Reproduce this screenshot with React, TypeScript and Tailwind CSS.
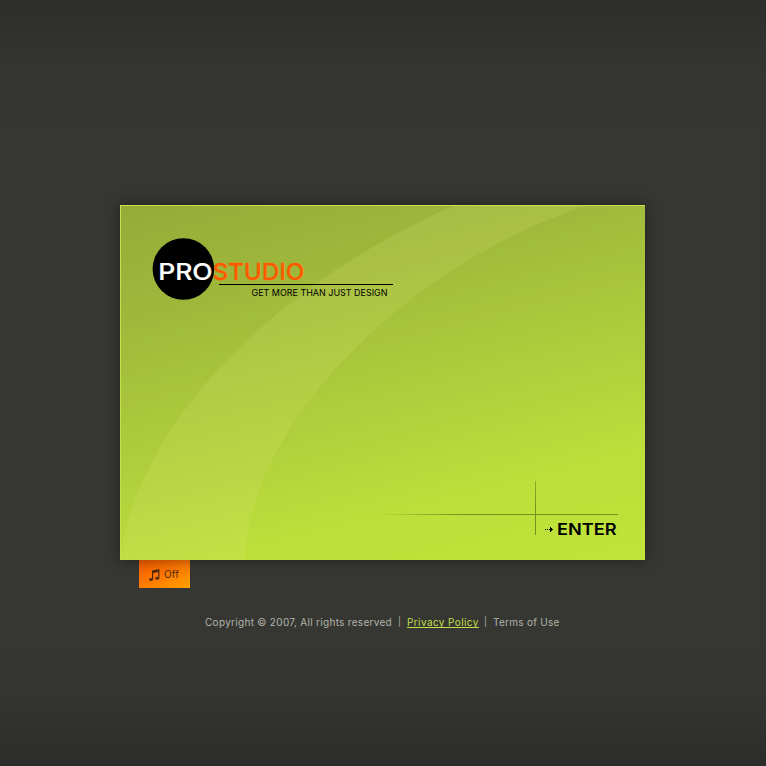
function Logo() {
  return (
    <svg className="block h-[70px] w-[242px] overflow-visible" viewBox="0 0 242 70" role="img" aria-label="Prostudio">
      <circle cx="31.4" cy="32" r="30.8" fill="#000" />
      <g fontFamily='"Inter", "Liberation Sans", sans-serif' fontSize="23.4" fontWeight="500">
        <text x="6.2" y="43" fill="#fff" stroke="#fff" strokeWidth=".2" textLength="54.5" lengthAdjust="spacingAndGlyphs">PRO</text>
        <text x="60.4" y="43" fill="#ff5a00" stroke="#ff5a00" strokeWidth=".3" textLength="92" lengthAdjust="spacingAndGlyphs">STUDIO</text>
      </g>
      <rect x="67" y="47" width="174" height="1" fill="#000" />
      <text x="99.5" y="59" fontFamily='"Inter", "Liberation Sans", sans-serif' fontSize="9.6" fill="#000" textLength="136" lengthAdjust="spacingAndGlyphs">GET MORE THAN JUST DESIGN</text>
    </svg>
  );
}

function Swoosh() {
  return (
    <svg className="pointer-events-none absolute inset-0 h-full w-full" viewBox="0 0 525 355" aria-hidden="true">
      <path d="M335 0C158 78 18 215 0 355H125C130 210 300 53 469 0Z" fill="#e0ea78" fillOpacity=".17" />
      <path d="M0 .5H525M.5 0V355" stroke="#c4e04a" fill="none" />
    </svg>
  );
}

function EnterLink() {
  return (
    <a href="#enter" className="block" aria-label="Enter">
      <svg className="block h-[60px] w-[241px]" viewBox="0 0 241 60">
        <defs>
          <linearGradient id="rule" x1="0" x2="1" y1="0" y2="0">
            <stop offset="0" stopColor="#799020" stopOpacity="0" />
            <stop offset=".35" stopColor="#799020" />
          </linearGradient>
          <linearGradient id="post" x1="0" x2="0" y1="0" y2="1">
            <stop offset="0" stopColor="#799020" stopOpacity=".65" />
            <stop offset=".5" stopColor="#799020" />
          </linearGradient>
        </defs>
        <rect x="0" y="33" width="241" height="1" fill="url(#rule)" />
        <rect x="158" y="0" width="1" height="54" fill="url(#post)" />
        <g fill="#000" shapeRendering="crispEdges">
          <rect x="168" y="48" width="1" height="1" />
          <rect x="170" y="48" width="1" height="1" />
          <rect x="172" y="48" width="4" height="1" />
          <rect x="173" y="46" width="1" height="5" />
          <rect x="174" y="47" width="1" height="3" />
        </g>
        <text x="180" y="54" fontFamily='"Inter", "Liberation Sans", sans-serif' fontSize="16.5" fontWeight="600" textLength="59.7" lengthAdjust="spacingAndGlyphs">ENTER</text>
      </svg>
    </a>
  );
}

function SoundToggle() {
  return (
    <button className="ml-[19px] flex h-[28px] w-[51px] items-center bg-[linear-gradient(155deg,#f45a00_0%,#ff7900_50%,#ffa200_100%)] pl-[10px] text-[#522a10]">
      <svg className="mt-[2px] h-[12px] w-[11px]" viewBox="0 0 11 12" fill="currentColor" aria-hidden="true">
        <path d="M3 1.4 10.4 0V9H9.2V3L4.2 4V10.5H3Z" />
        <ellipse cx="2" cy="10.4" rx="2" ry="1.5" />
        <ellipse cx="8.2" cy="9.2" rx="2" ry="1.5" />
      </svg>
      <span className="ml-[4px] text-[10px] leading-[12px] tracking-[0.1px]">Off</span>
    </button>
  );
}

export default function App() {
  return (
    <div className="h-[766px] w-[766px] overflow-hidden bg-[linear-gradient(180deg,#2d2d2b_0px,#343531_60px,#363732_140px,#363732_640px,#343531_700px,#2c2c2a_766px)] pt-[205px] font-['Inter','Liberation_Sans',sans-serif]">
      <main className="relative ml-[120px] flex h-[355px] w-[525px] flex-col justify-between bg-[linear-gradient(166deg,#95ab38_0%,#9fb83b_24%,#b1cf3c_56%,#bddf3a_78%,#c0e43a_100%)] shadow-[0_0_14px_rgba(0,0,0,0.4)]">
        <Swoosh />
        <div className="relative pl-[32px] pt-[32px]">
          <Logo />
        </div>
        <div className="relative flex justify-end pb-[19px] pr-[27px]">
          <EnterLink />
        </div>
      </main>
      <div className="ml-[120px] w-[525px]">
        <SoundToggle />
      </div>
      <footer className="mt-[27px] flex h-[14px] items-center pl-[205px] text-[10px] leading-[14px] whitespace-nowrap text-[#b3b3ac]">
        <span className="w-[193px] tracking-[0.3px]">Copyright © 2007, All rights reserved</span>
        <span className="w-[9px] text-[9px]">|</span>
        <a href="#privacy" className="w-[72px] border-b border-[#c4df4e] leading-[10px] tracking-[0.4px] text-[#c4df4e]">Privacy Policy</a>
        <span className="ml-[5px] w-[9px] text-[9px]">|</span>
        <a href="#terms" className="tracking-[0.28px]">Terms of Use</a>
      </footer>
    </div>
  );
}
